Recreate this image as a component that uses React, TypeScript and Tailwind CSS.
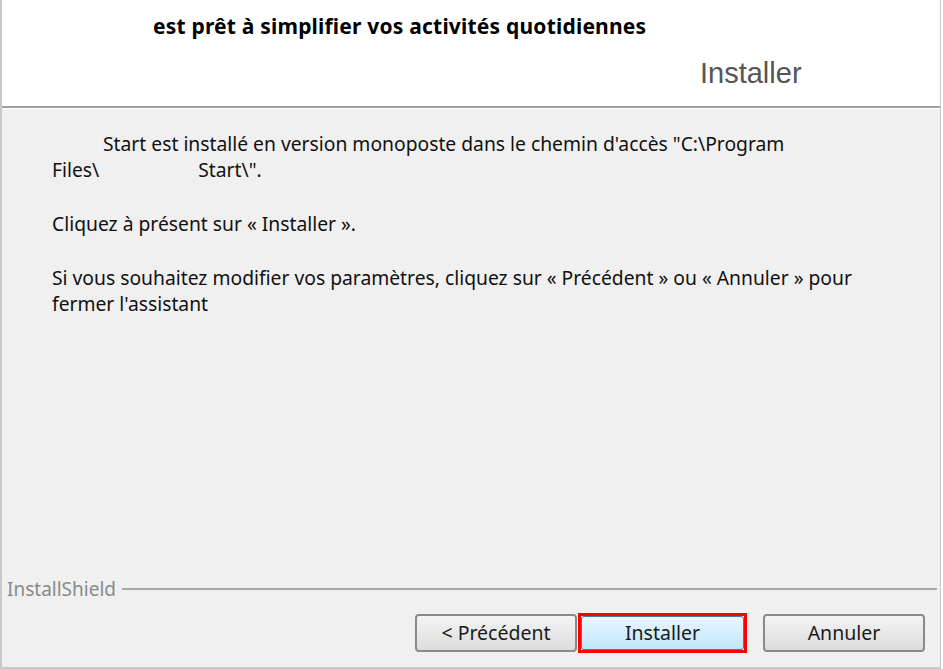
import React from 'react';

// Windows-style wizard step: "ready to install"
const font = { fontFamily: '"Noto Sans", "Liberation Sans", sans-serif' };

const WizButton = ({ label, primary }: { label: string; primary?: boolean }) => {
  if (primary) {
    return (
      <div className="border-[3px] border-[#ff0000] p-0">
        <button className="flex h-[34px] w-[163px] items-center justify-center rounded-[3px] border border-[#3c7fb1] bg-gradient-to-b from-[#eaf6fd] to-[#bee6fd] text-[19.5px] text-[#1a1a1a]">
          {label}
        </button>
      </div>
    );
  }
  return (
    <button className="flex h-[38px] w-[162px] items-center justify-center rounded-[4px] border-2 border-[#8a8a8a] bg-gradient-to-b from-[#f4f4f4] to-[#dcdcdc] text-[19.5px] text-[#1a1a1a]">
      {label}
    </button>
  );
};

export default function App() {
  return (
    <div className="h-[669px] w-[943px] overflow-hidden bg-white" style={font}>
      <div className="flex h-full w-[941px] flex-col border-l-2 border-r border-b-2 border-[#c8c8c8]">
        {/* header */}
        <div className="relative h-[106px] bg-white">
          <div className="pl-[151px] pt-[11px] text-[21px] font-bold tracking-[0.2px] text-black">
            est prêt à simplifier vos activités quotidiennes
          </div>
          <div
            className="absolute left-[698px] top-[52px] text-[29px] text-[#555555]"
            style={{ fontFamily: '"Liberation Sans", Arial, sans-serif' }}
          >
            Installer
          </div>
        </div>
        <div className="h-[2px] bg-[#a0a0a0]" />
        <div className="h-px bg-white" />

        {/* body */}
        <div className="flex flex-1 flex-col bg-[#f0f0f0]">
          <div className="flex flex-col gap-[28px] pl-[50px] pt-[22px] text-[19.3px] leading-[26px] text-[#111111]">
            <p>
              <span className="inline-block w-[51px]" />
              Start est installé en version monoposte dans le chemin d'accès "C:\Program
              <br />
              Files\<span className="inline-block w-[99px]" />Start\".
            </p>
            <p>Cliquez à présent sur « Installer ».</p>
            <p>
              Si vous souhaitez modifier vos paramètres, cliquez sur « Précédent » ou « Annuler » pour
              <br />
              fermer l'assistant
            </p>
          </div>

          <div className="mt-auto flex items-center gap-[6px] pl-[5px] pr-[3px]">
            <span className="text-[19px] text-[#8a8a8a]">InstallShield</span>
            <div className="h-[2px] flex-1 bg-[#a8a8a8]" />
          </div>

          <div className="flex items-center justify-end pb-[14px] pr-[15px] pt-[10px]">
            <WizButton label="< Précédent" />
            <div className="ml-[1px]">
              <WizButton label="Installer" primary />
            </div>
            <div className="ml-[16px]">
              <WizButton label="Annuler" />
            </div>
          </div>
        </div>
      </div>
    </div>
  );
}
